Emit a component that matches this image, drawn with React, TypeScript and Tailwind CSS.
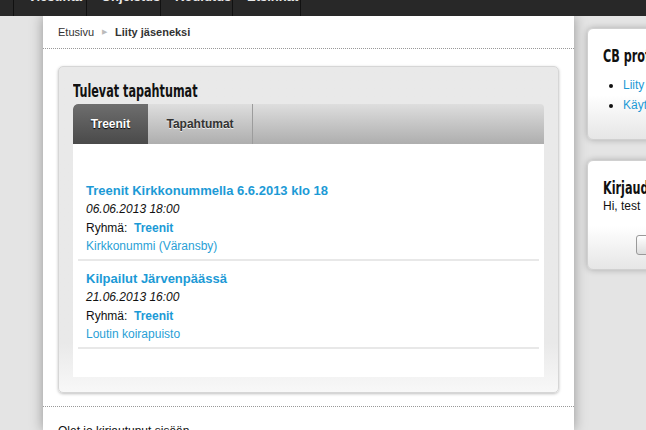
export default function App() {
  const navItems = ['Viestintä', 'Ohjeistus', 'Koulutus', 'Etsinnät']
  const events = [
    {
      title: 'Treenit Kirkkonummella 6.6.2013 klo 18',
      date: '06.06.2013 18:00',
      group: 'Treenit',
      place: 'Kirkkonummi (Väransby)',
    },
    {
      title: 'Kilpailut Järvenpäässä',
      date: '21.06.2013 16:00',
      group: 'Treenit',
      place: 'Loutin koirapuisto',
    },
  ]
  // narrow display face for box headings
  const heading =
    "inline-block origin-left scale-x-[0.66] whitespace-nowrap font-['DejaVu_Sans',sans-serif] font-bold text-[#111]"

  return (
    <div className="w-[646px] h-[430px] overflow-hidden bg-[#e4e4e4] font-['Liberation_Sans',Arial,sans-serif] text-[#222]">
      {/* top menu, cut off at the top */}
      <nav className="h-4 bg-[#282828] flex pl-[13px] relative z-10">
        {navItems.map((item, i) => (
          <div
            key={item}
            className={`h-4 overflow-hidden border-l border-[#111] pl-[14px] ${i === 0 ? 'w-[73px]' : i === 1 ? 'w-[74px]' : i === 2 ? 'w-[72px]' : 'w-[68px]'}`}
          >
            <div className="-mt-[11px] text-[13px] leading-4 font-bold text-[#e8e8e8] whitespace-nowrap">{item}</div>
          </div>
        ))}
        <div className="h-4 border-l border-[#111] w-[60px]" />
      </nav>

      <div className="flex">
        <div className="w-[43px] shrink-0" />

        {/* main column */}
        <main className="w-[531px] shrink-0 bg-white shadow-[0_0_12px_rgba(0,0,0,0.35)] h-[414px]">
          <div className="h-[33px] flex items-center pl-[15px] text-[11px] border-b border-dotted border-[#999]">
            <span className="text-[#333]">Etusivu</span>
            <span className="mx-[8px] text-[7px] text-[#bbb]">▶</span>
            <span className="font-bold text-[#333]">Liity jäseneksi</span>
          </div>

          <div className="px-[15px] pt-[17px] pb-[13px] border-b border-dotted border-[#999]">
            <section className="h-[327px] rounded-[5px] border border-[#d6d6d6] shadow-[0_1px_3px_rgba(0,0,0,0.25)] px-[14px] pt-[13px] pb-[15px] flex flex-col bg-gradient-to-b from-[#e9e9e9] from-[85%] to-[#f8f8f8]">
              <h2 className="h-[22px]">
                <span className={`${heading} text-[17px] leading-[22px]`}>Tulevat tapahtumat</span>
              </h2>

              <div className="h-[40px] mt-[2px] flex rounded-tl-[5px] rounded-tr-[4px] bg-gradient-to-b from-[#dedede] to-[#aeaeae] overflow-hidden">
                <div className="w-[75px] flex items-center justify-center bg-gradient-to-b from-[#6e6e6e] to-[#4a4a4a] rounded-tl-[5px] text-[12px] font-bold text-white [text-shadow:0_1px_1px_#000]">
                  Treenit
                </div>
                <div className="w-[105px] flex items-center justify-center border-r border-[#9c9c9c] text-[12px] font-bold text-[#333] [text-shadow:0_1px_0_#eee]">
                  Tapahtumat
                </div>
              </div>

              <div className="flex-1 bg-white px-[5px] pt-[38px]">
                {events.map((ev) => (
                  <div key={ev.title} className="border-b-2 border-[#e8e8e8] px-[8px] pb-[4px] mb-[9px] last:mb-0">
                    <div className="text-[13px] font-bold text-[#1c9ad6] leading-[18.3px]">{ev.title}</div>
                    <div className="text-[12px] italic text-[#111] leading-[18.3px]">{ev.date}</div>
                    <div className="text-[12px] text-[#111] leading-[18.3px]">
                      Ryhmä:&nbsp; <span className="font-bold text-[#1c9ad6]">{ev.group}</span>
                    </div>
                    <div className="text-[12px] text-[#2a9fd6] leading-[18.3px]">{ev.place}</div>
                  </div>
                ))}
              </div>
            </section>
          </div>

          <p className="pl-[15px] pt-[15px] text-[12px] text-[#111]">Olet jo kirjautunut sisään.</p>
        </main>

        {/* right column */}
        <aside className="ml-[13px] pt-[12px] flex flex-col gap-[20px] w-[200px] shrink-0">
          <div className="h-[112px] rounded-[6px] border border-[#d0d0d0] bg-gradient-to-b from-white from-[60%] to-[#e6e6e6] shadow-[0_0_6px_rgba(0,0,0,0.25)] pl-[15px] pt-[16px]">
            <h3 className="h-[20px]">
              <span className={`${heading} text-[17px] leading-[20px]`}>CB profiili</span>
            </h3>
            <ul className="mt-[10px] list-disc pl-[20px] text-[12px] text-[#1c9ad6] leading-[20px] marker:text-[#111]">
              <li>Liity jäseneksi</li>
              <li>Käyttäjätunnus</li>
            </ul>
          </div>
          <div className="h-[110px] rounded-[6px] border border-[#d0d0d0] bg-gradient-to-b from-white from-[60%] to-[#e6e6e6] shadow-[0_0_6px_rgba(0,0,0,0.25)] pl-[15px] pt-[16px]">
            <h3 className="h-[20px]">
              <span className={`${heading} text-[17px] leading-[20px]`}>Kirjaudu ulos</span>
            </h3>
            <p className="text-[12px] text-[#111] leading-[18px]">Hi, test</p>
            <button className="mt-[20px] ml-[33px] h-[20px] px-3 rounded-[3px] border border-[#999] bg-gradient-to-b from-white to-[#ddd] text-[12px]">
              Kirjaudu ulos
            </button>
          </div>
        </aside>
      </div>
    </div>
  )
}
